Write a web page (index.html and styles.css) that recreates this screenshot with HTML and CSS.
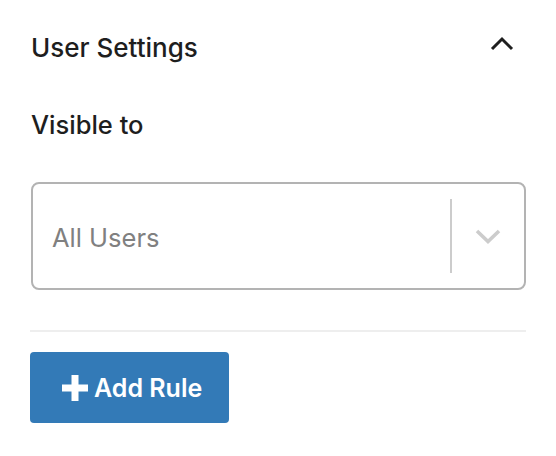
FILE: index.html
```html
<!DOCTYPE html>
<html>
<head>
<meta charset="utf-8">
<link rel="stylesheet" href="styles.css">
</head>
<body>
<div class="panel">
  <div class="header">
    <h2 class="title">User Settings</h2>
    <svg class="toggle" width="24" height="24" viewBox="0 0 24 24"><path d="M2 15 L12 5 L22 15" fill="none" stroke="#1e1e1e" stroke-width="3"/></svg>
  </div>
  <div class="label">Visible to</div>
  <div class="select">
    <div class="value">All Users</div>
    <div class="sep"></div>
    <div class="indicator">
      <svg width="26" height="16" viewBox="0 0 26 16"><path d="M2 3 L13 13.5 L24 3" fill="none" stroke="#cccccc" stroke-width="3.6"/></svg>
    </div>
  </div>
  <div class="divider"></div>
  <button class="add">
    <svg class="plus" width="26" height="26" viewBox="0 0 26 26"><path d="M9.5 0h7v9.5H26v7h-9.5V26h-7v-9.5H0v-7h9.5z" fill="#fff"/></svg>
    <span>Add Rule</span>
  </button>
</div>
</body>
</html>
```
FILE: styles.css
```css
html, body {
  margin: 0;
  padding: 0;
  background: #ffffff;
}
body {
  font-family: Inter, "Noto Sans", sans-serif;
  color: #1e1e1e;
}
.panel {
  padding: 0 30px 0 30px;
}
.header {
  height: 96px;
  display: flex;
  align-items: center;
  justify-content: space-between;
  padding-left: 1px;
}
.title {
  margin: 0;
  font-size: 26px;
  font-weight: 500;
  line-height: 30px;
}
.toggle {
  margin-right: 12px;
  margin-top: -4px;
}
.label {
  margin-top: 14px;
  padding-left: 1px;
  font-size: 25.5px;
  font-weight: 500;
  line-height: 30px;
}
.select {
  margin-top: 42px;
  margin-left: 1px;
  height: 108px;
  box-sizing: border-box;
  border: 2px solid #b3b3b3;
  border-radius: 8px;
  display: flex;
  align-items: center;
}
.value {
  flex: 1;
  padding-left: 19px;
  padding-top: 4px;
  font-size: 25.5px;
  color: #808080;
  line-height: 34px;
}
.sep {
  align-self: stretch;
  margin: 15px 0;
  width: 2px;
  background: #cccccc;
}
.indicator {
  width: 72px;
  display: flex;
  justify-content: center;
  align-items: center;
}
.divider {
  margin-top: 40px;
  height: 2px;
  background: #eeeeee;
}
.add {
  margin-top: 20px;
  width: 199px;
  height: 71px;
  border: none;
  border-radius: 4px;
  background: #337ab7;
  color: #ffffff;
  font-family: Inter, "Noto Sans", sans-serif;
  font-size: 25px;
  font-weight: 600;
  display: flex;
  align-items: center;
  padding: 0 0 0 32px;
  gap: 6px;
}
.plus {
  flex: none;
}
```
